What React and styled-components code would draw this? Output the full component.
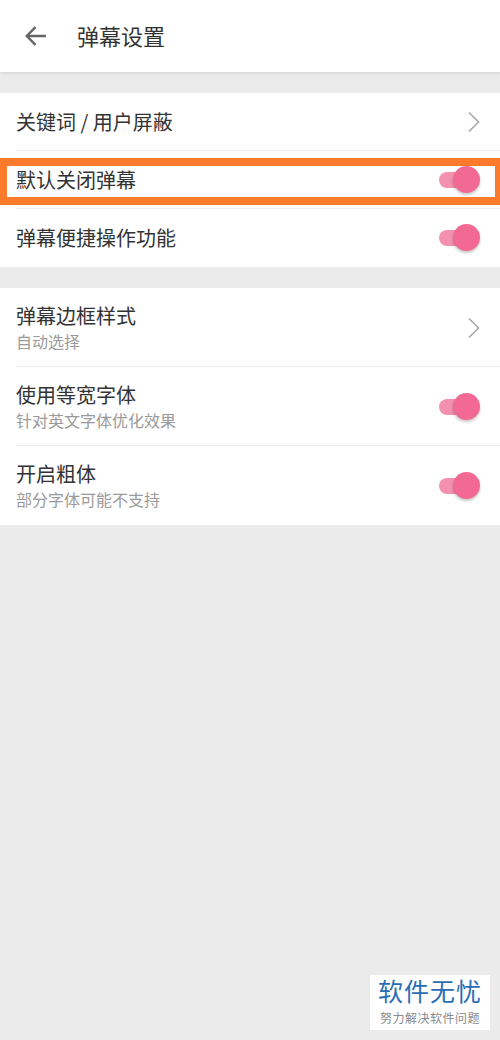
import React from 'react';
import styled, { createGlobalStyle } from 'styled-components';

const GlobalStyle = createGlobalStyle`
  html, body {
    margin: 0;
    padding: 0;
    background: #ebebeb;
  }
  body {
    font-family: "Noto Sans CJK SC", "Noto Sans", sans-serif;
  }
`;

const Page = styled.div`
  position: relative;
  width: 500px;
  height: 1040px;
  background: #ebebeb;
  overflow: hidden;
`;

const Header = styled.div`
  display: flex;
  align-items: center;
  height: 72px;
  background: #fff;
  box-shadow: 0 1px 3px rgba(0, 0, 0, 0.12);
  position: relative;
  z-index: 1;
`;

const BackButton = styled.div`
  width: 72px;
  height: 72px;
  display: flex;
  align-items: center;
  padding-left: 24px;
  box-sizing: border-box;
`;

const Title = styled.div`
  font-size: 22px;
  color: #333;
  margin-left: 5px;
  margin-top: -2px;
`;

const Section = styled.div`
  background: #fff;
  margin-top: ${p => p.$gap}px;
`;

const Row = styled.div`
  display: flex;
  align-items: center;
  height: ${p => p.$tall ? 79 : 58}px;
  padding: 0 16px;
  box-sizing: border-box;
  position: relative;
  &:not(:last-child)::after {
    content: '';
    position: absolute;
    left: 16px;
    right: 0;
    bottom: 0;
    height: 1px;
    background: #ececec;
  }
`;

const Texts = styled.div`
  flex: 1;
  display: flex;
  flex-direction: column;
`;

const Label = styled.div`
  font-size: 20px;
  color: #333;
  line-height: 26px;
`;

const Sub = styled.div`
  font-size: 16px;
  color: #9a9a9a;
  line-height: 22px;
  margin-top: 1px;
`;

const Switch = styled.div`
  position: relative;
  width: 48px;
  height: 28px;
`;

const Track = styled.div`
  position: absolute;
  left: 3px;
  top: 6px;
  width: 34px;
  height: 16px;
  border-radius: 8px;
  background: #f391ae;
`;

const Knob = styled.div`
  position: absolute;
  right: 4px;
  top: 0;
  width: 27px;
  height: 27px;
  border-radius: 50%;
  background: #f26a93;
  box-shadow: 0 2px 3px rgba(0, 0, 0, 0.22);
`;

const Highlight = styled.div`
  position: absolute;
  left: 0;
  top: 158px;
  width: 500px;
  height: 47px;
  box-sizing: border-box;
  border-style: solid;
  border-color: #fb7a2b;
  border-width: 8px 5px 8px 7px;
  pointer-events: none;
`;

const Watermark = styled.div`
  position: absolute;
  left: 370px;
  top: 975px;
  width: 120px;
  height: 55px;
  background: #fff;
  display: flex;
  flex-direction: column;
  align-items: center;
  padding-top: 1px;
  box-sizing: border-box;
`;

const MarkMain = styled.div`
  font-size: 25px;
  line-height: 28px;
  color: #2a6db4;
  letter-spacing: 1px;
`;

const MarkSub = styled.div`
  font-size: 12px;
  line-height: 15px;
  color: #8a8a8a;
  letter-spacing: 0.5px;
  margin-top: 6px;
`;

const Chevron = () => (
  <svg width="14" height="22" viewBox="0 0 14 22" style={{ marginRight: 3 }}>
    <path d="M2 1.5 L11.5 11 L2 20.5" fill="none" stroke="#a9a9a9" strokeWidth="1.6" />
  </svg>
);

const Toggle = () => (
  <Switch>
    <Track />
    <Knob />
  </Switch>
);

const ArrowLeft = () => (
  <svg width="24" height="24" viewBox="0 0 24 24">
    <path d="M22 12 H3 M11.5 3.2 L2.8 12 L11.5 20.8" fill="none" stroke="#666" strokeWidth="2.4" />
  </svg>
);

const App = () => {
  return (
    <Page>
      <GlobalStyle />
      <Header>
        <BackButton><ArrowLeft /></BackButton>
        <Title>弹幕设置</Title>
      </Header>
      <Section $gap={21}>
        <Row>
          <Texts><Label>关键词 / 用户屏蔽</Label></Texts>
          <Chevron />
        </Row>
        <Row>
          <Texts><Label>默认关闭弹幕</Label></Texts>
          <Toggle />
        </Row>
        <Row>
          <Texts><Label>弹幕便捷操作功能</Label></Texts>
          <Toggle />
        </Row>
      </Section>
      <Section $gap={21}>
        <Row $tall>
          <Texts>
            <Label>弹幕边框样式</Label>
            <Sub>自动选择</Sub>
          </Texts>
          <Chevron />
        </Row>
        <Row $tall>
          <Texts>
            <Label>使用等宽字体</Label>
            <Sub>针对英文字体优化效果</Sub>
          </Texts>
          <Toggle />
        </Row>
        <Row $tall>
          <Texts>
            <Label>开启粗体</Label>
            <Sub>部分字体可能不支持</Sub>
          </Texts>
          <Toggle />
        </Row>
      </Section>
      <Highlight />
      <Watermark>
        <MarkMain>软件无忧</MarkMain>
        <MarkSub>努力解决软件问题</MarkSub>
      </Watermark>
    </Page>
  );
};

export default App;
